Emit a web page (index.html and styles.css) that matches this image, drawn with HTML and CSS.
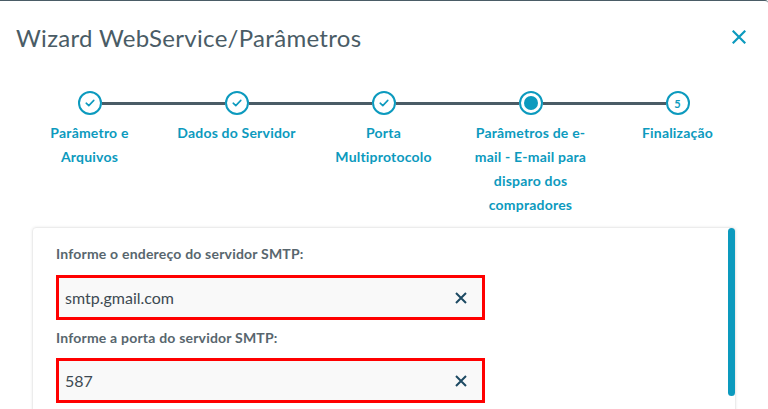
FILE: index.html
```html
<!DOCTYPE html>
<html lang="pt-BR">
<head>
<meta charset="utf-8">
<title>Wizard WebService/Parâmetros</title>
<link rel="stylesheet" href="styles.css">
</head>
<body>
<div class="modal">
  <header class="header">
    <h1 class="title">Wizard WebService/Parâmetros</h1>
    <button class="close" aria-label="Fechar">
      <svg width="14" height="14" viewBox="0 0 14 14"><path d="M1.5 1.5L12.5 12.5M12.5 1.5L1.5 12.5" stroke="#0c9abe" stroke-width="2.2" stroke-linecap="square" fill="none"/></svg>
    </button>
  </header>

  <ol class="stepper">
    <li class="step done first">
      <div class="track"><span class="line"></span><span class="circle"><svg width="10" height="8" viewBox="0 0 10 8"><path d="M1.2 4.2L3.8 6.6L8.8 1.4" stroke="#0c9abe" stroke-width="1.6" fill="none" stroke-linecap="round" stroke-linejoin="round"/></svg></span><span class="line"></span></div>
      <div class="label">Parâmetro e Arquivos</div>
    </li>
    <li class="step done">
      <div class="track"><span class="line"></span><span class="circle"><svg width="10" height="8" viewBox="0 0 10 8"><path d="M1.2 4.2L3.8 6.6L8.8 1.4" stroke="#0c9abe" stroke-width="1.6" fill="none" stroke-linecap="round" stroke-linejoin="round"/></svg></span><span class="line"></span></div>
      <div class="label">Dados do Servidor</div>
    </li>
    <li class="step done">
      <div class="track"><span class="line"></span><span class="circle"><svg width="10" height="8" viewBox="0 0 10 8"><path d="M1.2 4.2L3.8 6.6L8.8 1.4" stroke="#0c9abe" stroke-width="1.6" fill="none" stroke-linecap="round" stroke-linejoin="round"/></svg></span><span class="line"></span></div>
      <div class="label">Porta Multiprotocolo</div>
    </li>
    <li class="step active">
      <div class="track"><span class="line"></span><span class="circle"><span class="dot"></span></span><span class="line"></span></div>
      <div class="label">Parâmetros de e-mail - E-mail para disparo dos compradores</div>
    </li>
    <li class="step last">
      <div class="track"><span class="line"></span><span class="circle num">5</span><span class="line"></span></div>
      <div class="label">Finalização</div>
    </li>
  </ol>

  <section class="panel">
    <div class="panel-body">
      <label class="field-label">Informe o endereço do servidor SMTP:</label>
      <div class="input">
        <span class="value">smtp.gmail.com</span>
        <svg class="clear" width="12" height="12" viewBox="0 0 12 12"><path d="M1 1L11 11M11 1L1 11" stroke="#1d4a63" stroke-width="2" fill="none"/></svg>
      </div>
      <label class="field-label second">Informe a porta do servidor SMTP:</label>
      <div class="input">
        <span class="value">587</span>
        <svg class="clear" width="12" height="12" viewBox="0 0 12 12"><path d="M1 1L11 11M11 1L1 11" stroke="#1d4a63" stroke-width="2" fill="none"/></svg>
      </div>
    </div>
    <div class="scrollbar"></div>
  </section>
</div>
</body>
</html>
```

FILE: styles.css
```css
* { box-sizing: border-box; }
html, body {
  margin: 0;
  padding: 0;
  background: #ffffff;
  overflow: hidden;
}
body {
  font-family: Lato, "Noto Sans", sans-serif;
  color: #4a5c66;
  width: 768px;
  height: 409px;
}
.modal {
  border-top: 1px solid #4a5c66;
  border-top-right-radius: 3px;
  height: 409px;
}
.header {
  display: flex;
  align-items: center;
  justify-content: space-between;
  height: 75px;
  padding: 0 22px 0 16px;
}
.title {
  margin: 0;
  font-size: 24px;
  font-weight: 400;
  color: #4a5c66;
  letter-spacing: 0.3px;
  margin-top: -3px;
}
.close {
  border: 0;
  background: none;
  padding: 0;
  width: 14px;
  height: 14px;
  display: flex;
  margin-top: -4px;
}
.stepper {
  list-style: none;
  margin: 0;
  padding: 15px 0 0 16px;
  display: grid;
  grid-template-columns: repeat(5, 147px);
}
.step {
  display: flex;
  flex-direction: column;
  align-items: center;
}
.track {
  display: flex;
  align-items: center;
  width: 100%;
  height: 24px;
}
.line {
  flex: 1;
  height: 3px;
  background: #4a5c66;
}
.first .line:first-child,
.last .line:last-child {
  background: transparent;
}
.circle {
  width: 24px;
  height: 24px;
  border: 2px solid #0c9abe;
  border-radius: 50%;
  display: flex;
  align-items: center;
  justify-content: center;
  background: #fff;
  flex: none;
}
.dot {
  width: 14px;
  height: 14px;
  border-radius: 50%;
  background: #0c9abe;
}
.num {
  font-size: 11px;
  font-weight: 700;
  color: #0c9abe;
}
.label {
  margin-top: 6px;
  font-size: 14px;
  font-weight: 700;
  letter-spacing: 0.2px;
  line-height: 24px;
  color: #0c9abe;
  text-align: center;
  padding: 0 12px;
}
.panel {
  margin: 10px 32px 0 32px;
  border: 1px solid #ececec;
  border-radius: 4px 4px 0 0;
  box-shadow: 0 0 3px rgba(0,0,0,0.08);
  display: flex;
  height: 200px;
}
.panel-body {
  flex: 1;
  padding: 16px 0 0 23px;
}
.field-label {
  display: block;
  font-size: 14px;
  font-weight: 700;
  letter-spacing: 0.2px;
  line-height: 20px;
  color: #58666e;
}
.input {
  margin-top: 11px;
  width: 429px;
  height: 45px;
  border: 3px solid #ff0000;
  background: #f9f9f9;
  display: flex;
  align-items: center;
  justify-content: space-between;
  padding: 0 15px 0 6px;
}
.value {
  font-size: 16px;
  color: #3d4a52;
}
.field-label.second {
  margin-top: 8px;
}
.field-label.second + .input {
  margin-top: 10px;
}
.scrollbar {
  width: 7px;
  height: 168px;
  background: #0c9abe;
  border-radius: 4px;
  align-self: flex-start;
}
```
